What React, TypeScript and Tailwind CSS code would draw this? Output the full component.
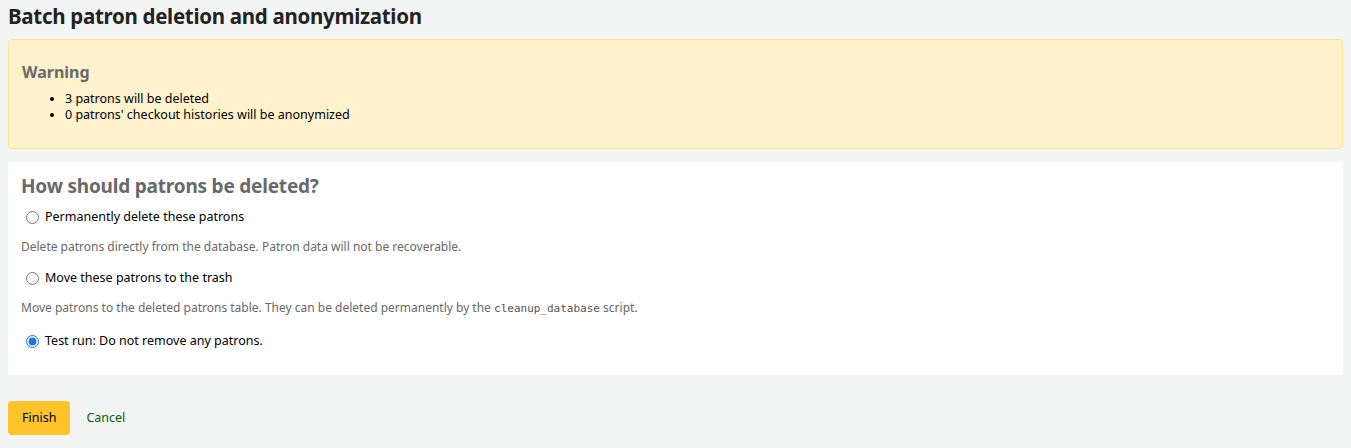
import React, { useState } from 'react';

type Option = { id: string; label: string; hint?: React.ReactNode; gap?: string };

const options: Option[] = [
  {
    id: 'delete',
    label: 'Permanently delete these patrons',
    hint: 'Delete patrons directly from the database. Patron data will not be recoverable.',
    gap: 'mb-[12px]',
  },
  {
    id: 'trash',
    label: 'Move these patrons to the trash',
    hint: (
      <>
        Move patrons to the deleted patrons table. They can be deleted permanently by the{' '}
        <code className="font-['DejaVu_Sans_Mono',monospace] text-[11px] text-[#555]">cleanup_database</code> script.
      </>
    ),
    gap: 'mb-[13px]',
  },
  { id: 'test', label: 'Test run: Do not remove any patrons.' },
];

export default function App() {
  const [choice, setChoice] = useState('test');

  return (
    <div className="min-h-[448px] bg-[#f3f4f4] px-2 font-['Noto_Sans',sans-serif] text-[13px] text-black">
      <h1 className="pt-[3px] text-[20.5px] leading-[26px] font-bold tracking-[-0.3px] text-[#222]">
        Batch patron deletion and anonymization
      </h1>

      <div className="mt-[10px] h-[110px] rounded-[4px] border border-[#ffe38f] bg-[#fff2cd] px-[13px] pt-[20px]">
        <h3 className="text-[16px] leading-[24px] font-bold text-[#696969]">Warning</h3>
        <ul className="mt-[7px] list-disc pl-[43px] text-[12.5px] leading-[16px]">
          <li>3 patrons will be deleted</li>
          <li>0 patrons' checkout histories will be anonymized</li>
        </ul>
      </div>

      <form className="mt-[13px] h-[213px] bg-white px-[13px] pt-[11px]" onSubmit={(e) => e.preventDefault()}>
        <h3 className="text-[19px] leading-[26px] font-bold tracking-[-0.2px] text-[#696969]">
          How should patrons be deleted?
        </h3>
        <div className="mt-[7px] flex flex-col">
          {options.map((o) => (
            <div key={o.id}>
              <label className="flex h-[22px] items-center gap-[6px] pl-[5px]">
                <input
                  type="radio"
                  name="action"
                  checked={choice === o.id}
                  onChange={() => setChoice(o.id)}
                  className="m-0 h-[13px] w-[13px] accent-[#1a73e8]"
                />
                <span className="text-[12.5px]">{o.label}</span>
              </label>
              {o.hint && (
                <p className={`mt-[11px] ${o.gap} text-[12px] leading-[16px] text-[#696969]`}>{o.hint}</p>
              )}
            </div>
          ))}
        </div>
      </form>

      <div className="mt-[26px] flex items-center gap-4">
        <button className="h-[34px] rounded-[4px] bg-[#ffc32b] px-[14px] text-[12.5px] text-black">Finish</button>
        <a href="#" className="text-[12.5px] text-[#006100]">
          Cancel
        </a>
      </div>
    </div>
  );
}
